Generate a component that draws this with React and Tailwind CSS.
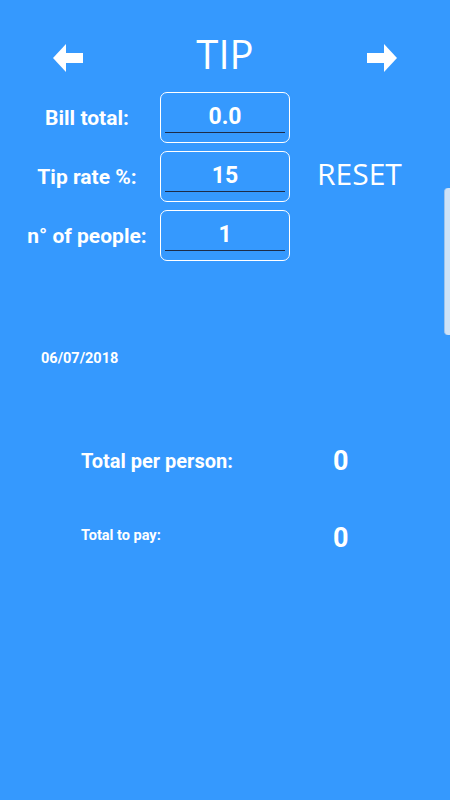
function Arrow({ dir }) {
  return (
    <svg width="30" height="28" viewBox="0 0 30 28" className={dir === 'right' ? 'scale-x-[-1]' : ''}>
      <polygon points="0,14 13,0 13,28" fill="white" />
      <rect x="12.5" y="9" width="17.5" height="10" fill="white" />
    </svg>
  );
}

function Field({ value }) {
  return (
    <div className="w-[130px] h-[51px] border-[1.5px] border-white rounded-[7px] px-[4px]">
      <div className="h-[40px] pt-[11px] border-b-[1.5px] border-[#1d2c48] text-center text-white font-bold text-[23px] leading-[26px]">
        {value}
      </div>
    </div>
  );
}

export default function App() {
  const rows = [
    { label: 'Bill total:', value: '0.0' },
    { label: 'Tip rate %:', value: '15', reset: true },
    { label: 'n° of people:', value: '1' }
  ];

  return (
    <div className="relative w-[450px] h-[800px] bg-[#3599fe] overflow-hidden font-['Roboto',sans-serif]">
      <div className="h-[92px] pt-[44px] px-[53px] flex items-start justify-between">
        <Arrow dir="left" />
        <div className="-mt-[15px] text-white font-['Open_Sans',sans-serif] text-[40px] leading-[50px]">TIP</div>
        <Arrow dir="right" />
      </div>

      <div className="flex flex-col gap-[8px]">
        {rows.map((row, i) => (
          <div key={i} className="flex items-center h-[51px]">
            <div className="w-[146px] ml-[14px] mt-[3px] text-center text-white font-bold text-[21px]">{row.label}</div>
            <Field value={row.value} />
            {row.reset && (
              <div className="ml-[27px] -mt-[5px] text-white font-['Open_Sans',sans-serif] text-[30px] leading-[36px]">RESET</div>
            )}
          </div>
        ))}
      </div>

      <div className="mt-[88px] pl-[41px] text-white font-bold text-[14.5px] leading-[20px]">06/07/2018</div>

      <div className="mt-[77px] flex items-center pl-[81px] h-[30px]">
        <div className="w-[252px] text-white font-bold text-[20px]">Total per person:</div>
        <div className="text-white font-bold text-[27px]">0</div>
      </div>
      <div className="mt-[47px] flex items-center pl-[81px] h-[30px]">
        <div className="w-[252px] -mt-[5px] text-white font-bold text-[14.5px]">Total to pay:</div>
        <div className="text-white font-bold text-[27px]">0</div>
      </div>

      <div className="absolute right-0 top-[188px] w-[6px] h-[147px] bg-[#cde2f8] rounded-l-[4px] border-l border-[#9ec3ea]"></div>
    </div>
  );
}
